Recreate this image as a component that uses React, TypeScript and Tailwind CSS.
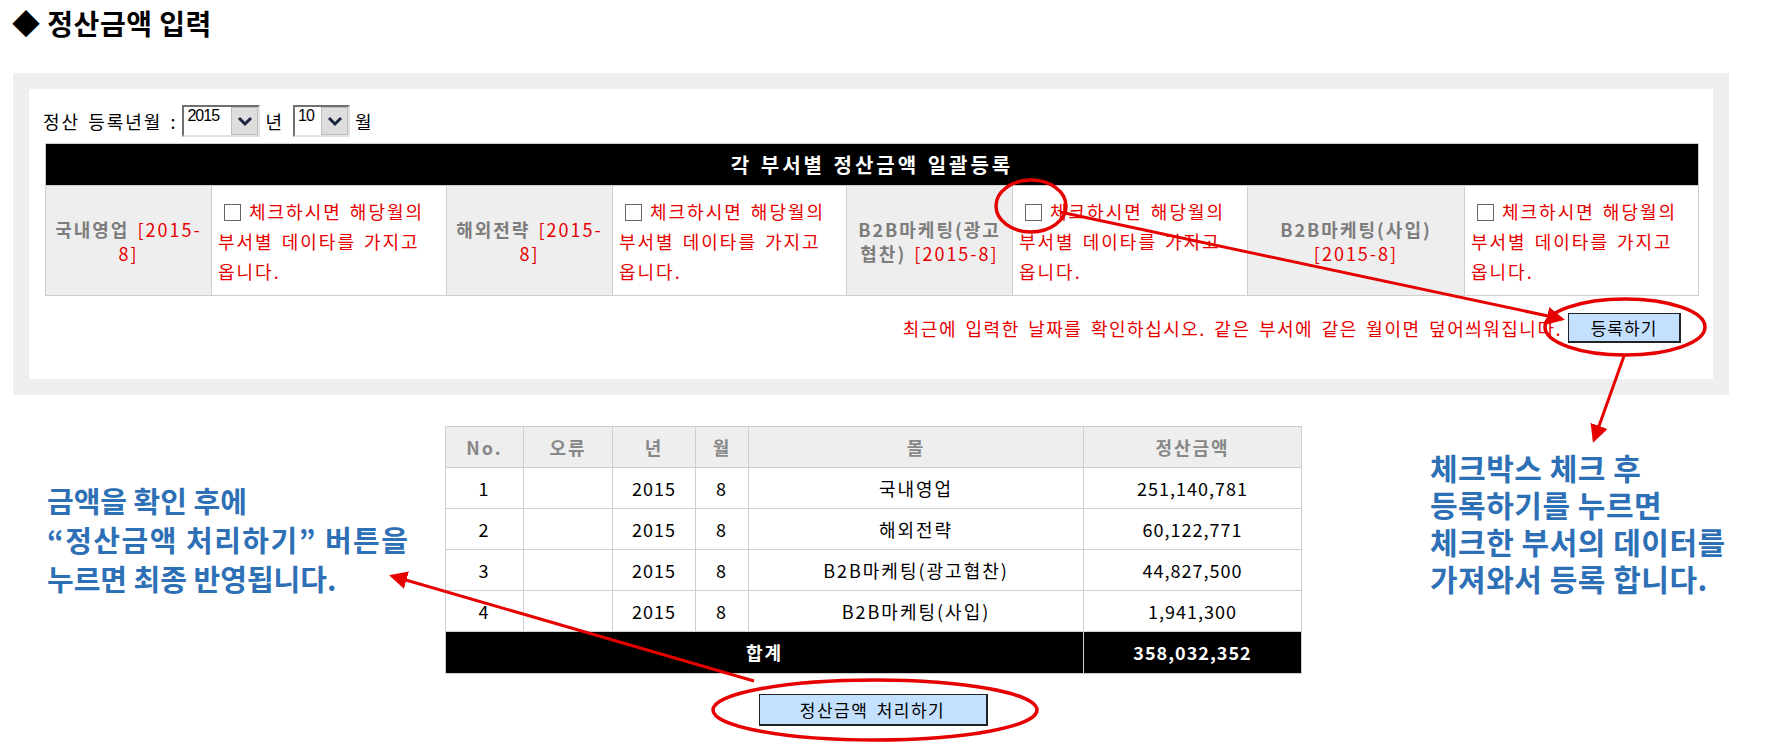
import React from 'react';

const txt = "text-[18px] tracking-[2px] [word-spacing:2px]";

function Box() {
  return <span className="inline-block w-[17px] h-[17px] border border-[#666] bg-white align-[-2px] ml-[6px] mr-[8px]" />;
}

function Chevron() {
  return (
    <svg width="16" height="11" viewBox="0 0 16 11">
      <path d="M2 2 L8 8 L14 2" fill="none" stroke="#1c2540" strokeWidth="3" />
    </svg>
  );
}

function FakeSelect({ value, width }: { value: string; width: string }) {
  return (
    <div className={`flex h-[32px] border-2 border-t-[#6f6f6f] border-l-[#6f6f6f] border-b-[#e2e2e2] border-r-[#e2e2e2] bg-white ${width}`}>
      <span className="flex-1 pl-[3px] text-[16px] leading-[18px] font-['Liberation_Sans',sans-serif] tracking-[-1px] text-black">
        {value}
      </span>
      <span className="w-[27px] flex items-center justify-center bg-[#dddddd] border border-[#bdbdbd]">
        <Chevron />
      </span>
    </div>
  );
}

const depts = [
  { name: '국내영업', l1: '[2015-', l2: '8]' },
  { name: '해외전략', l1: '[2015-', l2: '8]' },
];

function CheckCell() {
  return (
    <td className="bg-white border border-[#cfcfcf] pl-[6px] align-middle">
      <div className={`${txt} leading-[30px] text-[#e60000] whitespace-nowrap`}>
        <Box />체크하시면 해당월의<br />
        부서별 데이타를 가지고<br />
        옵니다.
      </div>
    </td>
  );
}

const rows = [
  { no: 1, mall: '국내영업', amount: '251,140,781' },
  { no: 2, mall: '해외전략', amount: '60,122,771' },
  { no: 3, mall: 'B2B마케팅(광고협찬)', amount: '44,827,500' },
  { no: 4, mall: 'B2B마케팅(사입)', amount: '1,941,300' },
];

export default function App() {
  const labelCell = "bg-[#eeeeee] border border-[#cfcfcf] text-center align-middle leading-[24px] font-bold text-[#7d7d7d]";
  const red = "text-[#e60000] font-normal";
  return (
    <div className="relative w-[1769px] h-[753px] overflow-hidden bg-white font-['Noto_Sans_CJK_KR',sans-serif] text-black">
      {/* Title */}
      <h1 className="h-[73px] pl-[12px] pt-[7px] text-[28px] leading-[32px] font-bold tracking-[0.5px]">
        ◆ 정산금액 입력
      </h1>

      {/* Bulk registration panel */}
      <div className="ml-[13px] w-[1716px] bg-[#efefef] p-4">
        <div className="h-[290px] bg-white pt-4">
          <div className={`flex items-center gap-[5px] pl-[14px] h-[32px] ${txt}`}>
            <span>정산 등록년월 :</span>
            <FakeSelect value="2015" width="w-[78px]" />
            <span className="mr-[4px]">년</span>
            <FakeSelect value="10" width="w-[57px]" />
            <span>월</span>
          </div>

          <table className="ml-4 mt-[6px] w-[1653px] table-fixed border-collapse">
            <colgroup>
              <col className="w-[166px]" />
              <col className="w-[235px]" />
              <col className="w-[166px]" />
              <col className="w-[234px]" />
              <col className="w-[166px]" />
              <col className="w-[235px]" />
              <col className="w-[217px]" />
              <col className="w-[234px]" />
            </colgroup>
            <tbody>
              <tr className="h-[42px]">
                <td colSpan={8} className="bg-black border border-[#cfcfcf] text-center text-white font-bold text-[20px] tracking-[3px] [word-spacing:1px]">
                  각 부서별 정산금액 일괄등록
                </td>
              </tr>
              <tr className="h-[110px]">
                {depts.map((d) => (
                  <React.Fragment key={d.name}>
                    <td className={`${labelCell} ${txt}`}>
                      {d.name} <span className={red}>{d.l1}</span>
                      <br />
                      <span className={red}>{d.l2}</span>
                    </td>
                    <CheckCell />
                  </React.Fragment>
                ))}
                <td className={`${labelCell} ${txt}`}>
                  B2B마케팅(광고
                  <br />
                  협찬) <span className={red}>[2015-8]</span>
                </td>
                <CheckCell />
                <td className={`${labelCell} ${txt}`}>
                  B2B마케팅(사입)
                  <br />
                  <span className={red}>[2015-8]</span>
                </td>
                <CheckCell />
              </tr>
            </tbody>
          </table>

          <div className="flex items-center justify-end gap-[6px] w-[1670px] mt-[17px] pr-[18px]">
            <span className="text-[18px] tracking-[1.5px] [word-spacing:3px] text-[#e60000]">
              최근에 입력한 날짜를 확인하십시오. 같은 부서에 같은 월이면 덮어씌워집니다.
            </span>
            <button className="w-[113px] h-[30px] bg-[#c4e0ff] border border-[#222] border-b-2 border-r-2 text-[17px] tracking-[1px] text-black">
              등록하기
            </button>
          </div>
        </div>
      </div>

      {/* Result table */}
      <table className="ml-[445px] mt-[31px] w-[856px] table-fixed border-collapse">
        <colgroup>
          <col className="w-[78px]" />
          <col className="w-[89px]" />
          <col className="w-[83px]" />
          <col className="w-[53px]" />
          <col className="w-[335px]" />
          <col className="w-[218px]" />
        </colgroup>
        <thead>
          <tr className="h-[41px] bg-[#eeeeee] text-[#888888] font-bold">
            {['No.', '오류', '년', '월', '몰', '정산금액'].map((h) => (
              <th key={h} className={`border border-[#cfcfcf] ${txt}`}>{h}</th>
            ))}
          </tr>
        </thead>
        <tbody>
          {rows.map((r) => (
            <tr key={r.no} className={`h-[41px] text-center ${txt}`}>
              <td className="border border-[#cfcfcf]">{r.no}</td>
              <td className="border border-[#cfcfcf]"></td>
              <td className="border border-[#cfcfcf] tracking-[1px]">2015</td>
              <td className="border border-[#cfcfcf]">8</td>
              <td className="border border-[#cfcfcf]">{r.mall}</td>
              <td className="border border-[#cfcfcf] tracking-[1px]">{r.amount}</td>
            </tr>
          ))}
          <tr className={`h-[42px] bg-black text-white font-bold text-center ${txt}`}>
            <td colSpan={5} className="border border-[#cfcfcf]">합계</td>
            <td className="border border-[#cfcfcf] tracking-[1px]">358,032,352</td>
          </tr>
        </tbody>
      </table>

      <div className="flex justify-center w-[1746px] mt-[20px]">
        <button className="w-[229px] h-[32px] bg-[#c4e0ff] border border-[#222] border-b-2 border-r-2 text-[17px] tracking-[1.5px] [word-spacing:3px] text-black">
          정산금액 처리하기
        </button>
      </div>

      {/* Annotations */}
      <div className="absolute left-[47px] top-[481px] text-[29px] leading-[39px] font-bold text-[#2e70b5]">
        금액을 확인 후에
        <br />
        <span className="tracking-[1.5px]">“정산금액 처리하기” 버튼을</span>
        <br />
        누르면 최종 반영됩니다.
      </div>
      <div className="absolute left-[1430px] top-[449px] text-[30px] leading-[37px] font-bold tracking-[0.5px] text-[#2e70b5]">
        체크박스 체크 후
        <br />
        등록하기를 누르면
        <br />
        체크한 부서의 데이터를
        <br />
        가져와서 등록 합니다.
      </div>

      <svg className="absolute inset-0 pointer-events-none" width="1769" height="753" viewBox="0 0 1769 753">
        <defs>
          <marker id="ah" markerWidth="6" markerHeight="6" refX="5" refY="3" orient="auto" markerUnits="strokeWidth">
            <path d="M0,0 L6,3 L0,6 z" fill="#e60000" />
          </marker>
        </defs>
        <g fill="none" stroke="#e60000" strokeWidth="3.5">
          <ellipse cx="1031" cy="206" rx="35" ry="26" />
          <ellipse cx="1625" cy="327" rx="80" ry="28" />
          <ellipse cx="875" cy="710" rx="162" ry="30" />
        </g>
        <g stroke="#e60000" strokeWidth="3">
          <line x1="1060" y1="212" x2="1562" y2="319" markerEnd="url(#ah)" />
          <line x1="1624" y1="356" x2="1594" y2="440" markerEnd="url(#ah)" />
          <line x1="754" y1="681" x2="392" y2="576" markerEnd="url(#ah)" />
        </g>
      </svg>
    </div>
  );
}
